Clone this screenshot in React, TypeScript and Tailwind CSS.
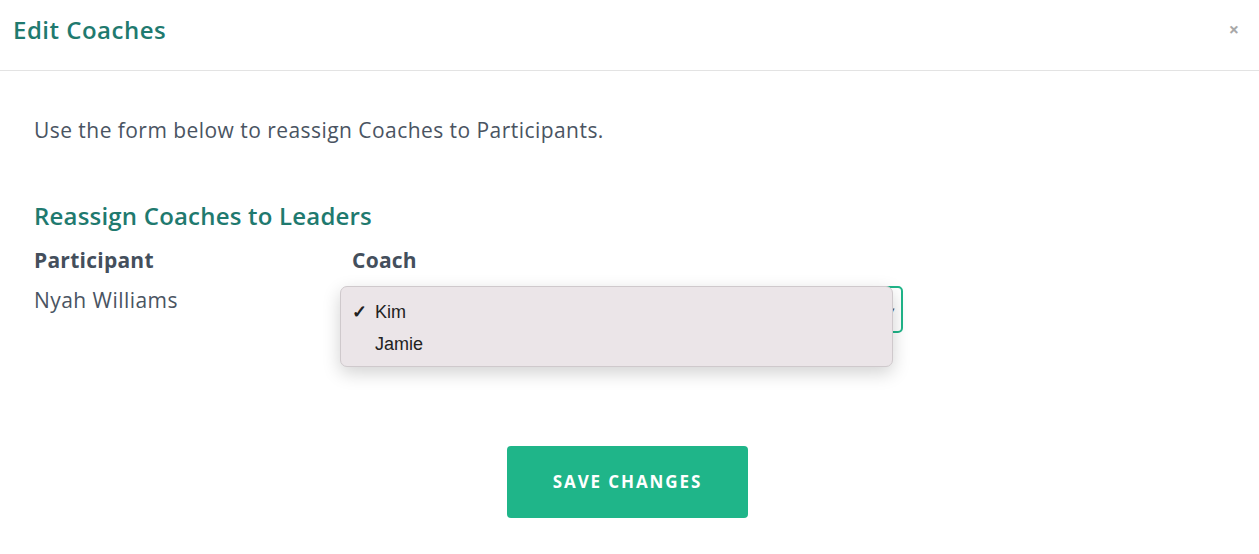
import React from 'react';

export default function App() {
  return (
    <div className="w-[1259px] h-[554px] bg-white font-['Open_Sans',sans-serif] text-[#4a5462] overflow-hidden">
      {/* Header */}
      <div className="h-[71px] flex items-center justify-between pl-[13px] pr-[20px] border-b border-[#e3e3e3]">
        <h1 className="text-[24px] font-semibold text-[#1f7a6f] tracking-[0.5px] -mt-[11px]">Edit Coaches</h1>
        <span className="text-[#a8a8a8] text-[18px] font-bold -mt-[11px]">×</span>
      </div>

      {/* Body */}
      <div className="px-[34px] pt-[44px]">
        <p className="text-[21px] leading-[30px] tracking-[0.45px]">Use the form below to reassign Coaches to Participants.</p>

        <h2 className="mt-[55px] text-[24px] font-semibold text-[#1f7a6f] leading-[32px] tracking-[0.2px]">Reassign Coaches to Leaders</h2>

        <div className="grid grid-cols-[318px_551px] mt-[14px]">
          <div className="text-[21px] font-bold leading-[28px] tracking-[0.25px] text-[#444f5c]">Participant</div>
          <div className="text-[21px] font-bold leading-[28px] tracking-[0.25px] text-[#444f5c]">Coach</div>
          <div className="text-[21px] leading-[28px] tracking-[0.45px] pt-[12px]">Nyah Williams</div>
          <div className="relative mt-[12px]">
            <div className="h-[47px] border-2 border-[#1fb589] rounded-[5px] flex items-center justify-end pr-[6px]">
              <span className="text-[9px] text-[#555]">▾</span>
            </div>
            {/* Native select popup */}
            <div className="absolute -left-[12px] top-0 w-[553px] h-[81px] bg-[#ebe5e8] rounded-[7px] border border-[#cfc9cc] shadow-[0_6px_18px_rgba(0,0,0,0.18)] font-['Liberation_Sans',sans-serif] text-[18px] text-[#222] pt-[13px]">
              <div className="flex items-center h-[25px]">
                <span className="w-[34px] pl-[11px] text-[18px] font-bold">✓</span>
                <span>Kim</span>
              </div>
              <div className="flex items-center h-[25px] mt-[7px]">
                <span className="w-[34px]"></span>
                <span>Jamie</span>
              </div>
            </div>
          </div>
        </div>

        <div className="flex justify-center mt-[113px] pr-[4px]">
          <button className="w-[241px] h-[72px] bg-[#1fb589] rounded-[4px] text-white text-[17px] font-bold tracking-[1.9px]">
            SAVE CHANGES
          </button>
        </div>
      </div>
    </div>
  );
}
